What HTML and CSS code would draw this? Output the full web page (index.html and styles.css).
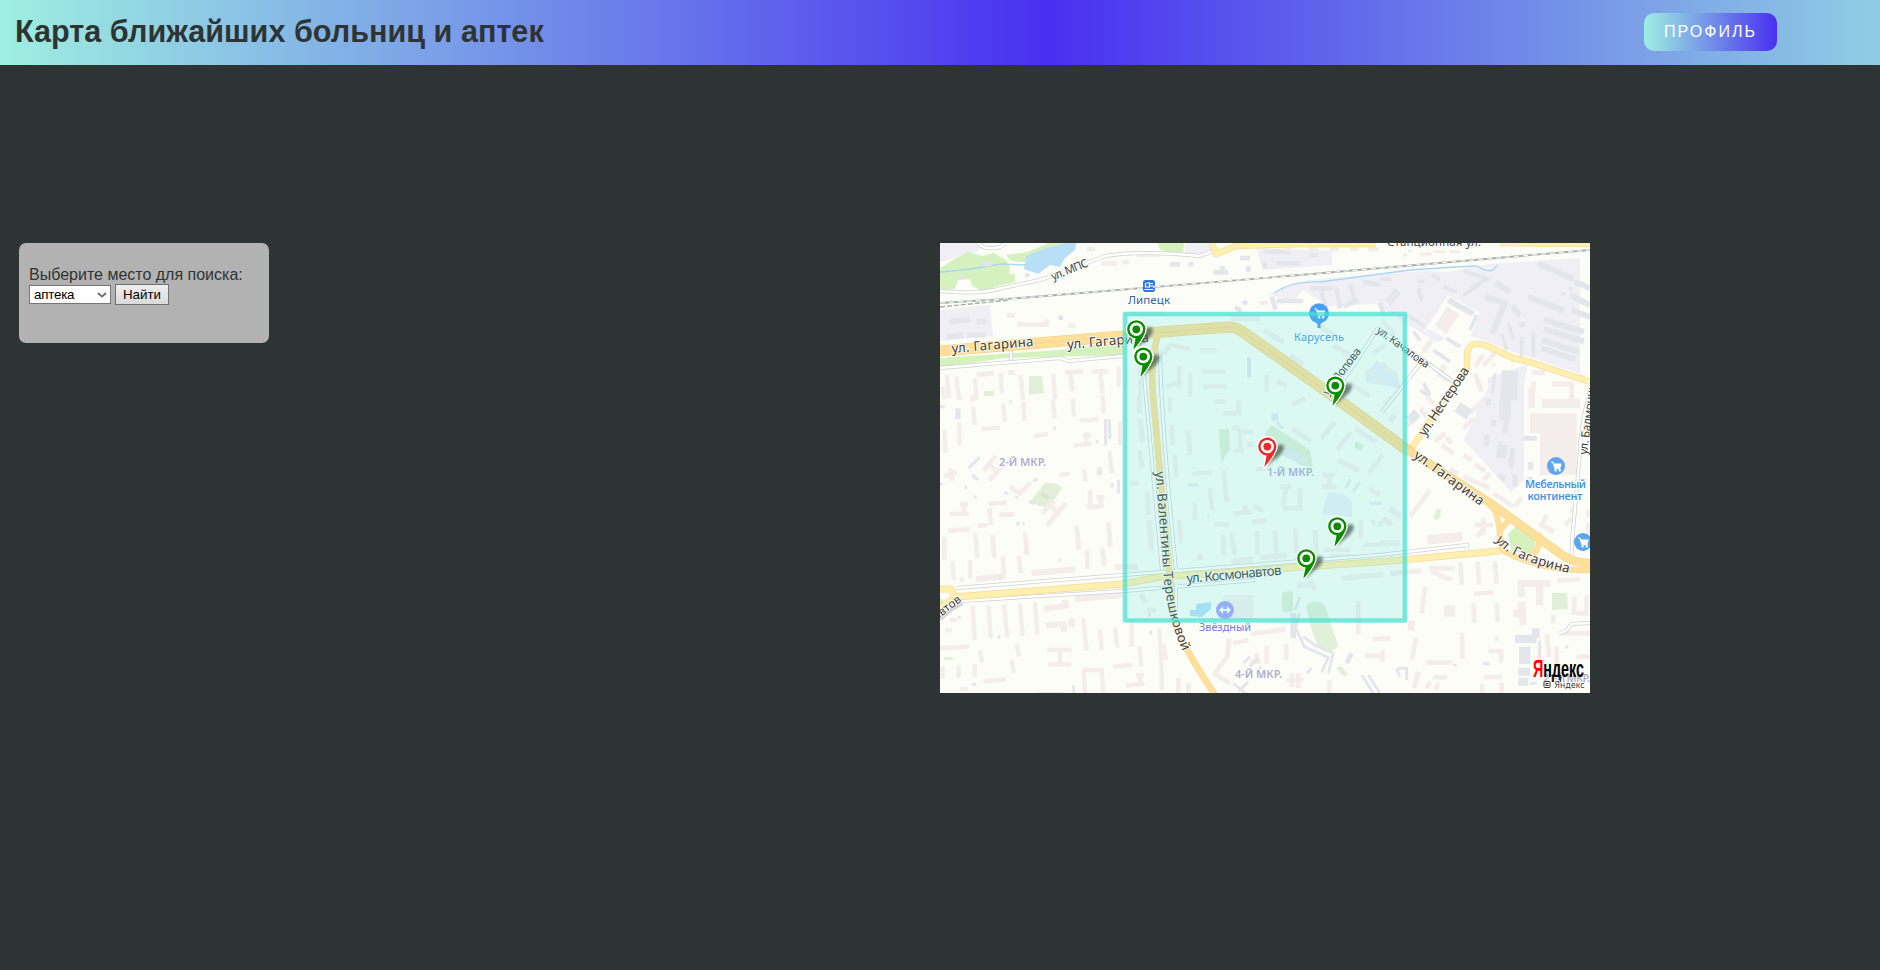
FILE: index.html
```html
<!DOCTYPE html>
<html lang="ru">
<head>
<meta charset="utf-8">
<title>Карта ближайших больниц и аптек</title>
<link rel="stylesheet" href="styles.css">
</head>
<body>
<header class="header">
  <h1 class="title">Карта ближайших больниц и аптек</h1>
  <a class="profile">ПРОФИЛЬ</a>
</header>
<main class="main">
  <form class="search">
    <label class="search-label" for="place">Выберите место для поиска:</label>
    <div class="controls">
      <div class="select-wrap">
        <select id="place" class="select"><option>аптека</option></select>
        <svg class="chevron" width="10" height="6" viewBox="0 0 10 6"><path d="M1 1l4 3.6L9 1"/></svg>
      </div>
      <button class="find" type="button">Найти</button>
    </div>
  </form>
  <svg class="map" width="650" height="450" viewBox="940 243 650 450">
    <defs>
      <filter id="soft" x="-50%" y="-50%" width="200%" height="200%"><feGaussianBlur stdDeviation="1.5"/></filter>
      <g id="pin">
        <path d="M-1 20L13 8Q19 1 15-2Q10-3 5 3Z" fill="#26382e" opacity=".6" filter="url(#soft)"/>
        <path d="M-3 20.500L-.5 9A9.200 9.200 0 1 1 8.500 3.500Q5 12-3 20.500Z" stroke="#fff" stroke-width="2.4" stroke-linejoin="round"/>
        <path d="M-3 20.500L-.5 8Q5 8 8.500 3.500Q5 12-3 20.500Z"/>
        <circle r="9.100"/><circle r="6.700" fill="#fff"/><circle r="3.900"/>
      </g>
      <g id="cart" fill="none" stroke="#fff" stroke-width="1.2"><path d="M-5-4h2l2 6.5h5.5"/><path d="M-2.3-2h7.2l-1 3.3h-5z" fill="#fff"/><circle cx="-.4" cy="4.3" r=".7"/><circle cx="3.7" cy="4.3" r=".7"/></g>
      <path id="tereshkova" d="M1155.500 471.500Q1160 530 1163 566Q1165 612 1183 652"/>
      <path id="gag4" d="M1495.500 540Q1507 560 1572 573.500"/>
    </defs>
    <rect x="940" y="243" width="650" height="450" fill="#fcfdf7"/>

    <!-- industrial zones -->
    <g class="zone">
      <path d="M940 243h45l-8 9-16 4-21 6zM940 310l50-5 3 31-53 5zM1257 248l75 3v14l-70 5zM1185 243h30l-5 11-25 3z"/>
      <path d="M1268 294l40-14 80-7 40-2 20 1 42-8 90-6V374l-50-17-17-5-25-10-30-11-12 8-10 3-60-38-64 3z"/>
      <path d="M1488 378l40-14-4 20v96l-13 12-47-52 24-52z"/>
    </g>
    <path d="M1448 295l32 18-15 37-36-21-6 4z" fill="#fcfdf7"/>
    <path d="M1303 290q5 3 26 17l8 10h-40q-12-9 6-27z" fill="#fcfdf7"/>

    <!-- parks and water -->
    <g class="park">
      <path d="M968 252l14 4 12-3 12 7 4 7-1 7h6l0 8-18 4-13 6-12-6-2-7-12 1-3 9-15 2v-23l13-8z"/>
      <path d="M1006 255l22-3 20-9h30l-23 14-20 6-24-2zM1160 243h24l-1 9-16 2-7-6zM1158 243h12v7h-10z"/>
      <path d="M940 358l120-8 64-8v13l-120 3-64 10zM940 598l4 3-4 5z"/>
      <path d="M1508 534l8-8 14 6 6 8-4 14-20-3z"/>
    </g>
    <g class="grass">
      <path d="M1029 376h13l2 17-15 2zM984 391h10v5h-10zM1097 467h5v8h-5zM1031 500l14-17q14-1 17 5l-12 18q-16 2-19-6z"/>
      <path d="M1219 429h10l1 20-9 14zM1265 435q5-12 8-9l37 24 3 17-13-2-17-12-6 9zM1356 441l8 4-3 6-7-4z"/>
      <path d="M1282 593q9-4 11 0v17q-6 5-11 0zM1306 606q9-9 19 0l13 39q-3 9-15 6-8-2-17-45zM1552 593h15l1 16-16 1zM1434 519l6-10 1 8-4 3zM1036 692h27v2h-27zM1336 668l5-2 7 8-4 3zM944 657h9v3h-9z"/>
    </g>
    <path class="water" d="M1026 256l20-8 20-5h10l-1 7-10 8-5 9-10-2-12 9-14-5z"/>
    <g class="stream"><path d="M940 272Q970 270 1000 264L1026 265"/><path d="M1275 293Q1290 281 1320 282L1380 274 1410 270 1455 267 1477 266Q1492 276 1497 265"/></g>
    <path class="water" d="M1196 604l15-2v7l-9 8-12-1v-6h6z"/>
    <path class="yard" d="M1328 492l15 2 9 8v15l-10-1-20-2z"/>
    <path class="yard" d="M1365 374l12-13 20 11 4 17-18-4-17-2z"/>

    <!-- buildings, one group per district -->
    <g transform="translate(940 240) scale(.3333)">
      <path class="gray" stroke-width="17" d="M28 245l60-6M80 285h58M20 292l50-8M110 245h30"/>
      <path class="gray" stroke-width="14" d="M355 233h14M60 112l12-5M125 72h30M262 100v12"/>
      <path class="pink" stroke-width="14" d="M232 254h95M240 245v15M320 238v15M385 257h20M200 226h25M110 404l50-4M375 397l55-4M485 70h45M545 66h22M590 45h70M205 398h20M455 394h50M440 27h25"/>
      <path class="pink" stroke-width="13" d="M20 405l8 70M48 410l10 70M105 415l5 65M182 400l4 60M242 405l8 75M340 402l5 75M392 400l5 55M482 402l6 60M536 380v60M8 440l6 38"/>
      <path class="gray pale" stroke-width="12" d="M570 220h95M600 380v90M660 390v80"/>
    </g>
    <g transform="translate(1160 240) scale(.3333)">
      <path class="gray" stroke-width="14" d="M160 97h45M180 85h15M310 35h80M350 70h70M315 65v20M30 73h30M85 73h15M240 54h30M450 45h25M265 77v18M250 183l10 10M225 202l20 12"/>
      <path class="gray" stroke-width="14" d="M335 170l12 40M350 183h80M450 145h70M480 140l20 70M530 145l10 60M570 130l15 60M610 125l50 10M550 200l45-20M660 190l10 30"/>
      <path class="pink" stroke-width="12" d="M370 27h25M445 28h30M510 28h25M570 28h25M625 28h30M298 188h25"/>
      <path class="gray pale" stroke-width="16" d="M210 235l90 0M310 270l60 35M480 260l60 35M520 315l50 30M390 345l40 30"/>
      <path class="gray pale" stroke-width="13" d="M10 345l20-30 60 12M120 330h50M20 440l45-15M57 378v65M90 400v70M125 395h70M130 440h70M320 405v50M350 360h50M350 425l30 10M620 390l50 45M570 430l60 40M640 340l35-25"/>
      <path class="gray" stroke-width="11" d="M267 352v60"/>
    </g>
    <g transform="translate(1380 240) scale(.3333)">
      <path class="gray" stroke-width="18" d="M475 70l105 48M585 125l45 20M445 170l105 42M570 165l60 30M575 210l55 22M492 240l120 36M492 268l120 36M485 300l110 36M485 325l100 33M345 128l45 28M315 170l60 20-38 90M395 200l25 25M425 245v15M205 180l75 42"/>
      <path class="gray" stroke-width="11" d="M20 185l30-40M30 195l28-40M0 118h35M112 124h22M115 145l10 38M155 105l25 15M190 140l40 15M250 92l70 25-50 25M250 165l50-30M460 280v70M425 290v60M385 250l15 50M365 280l15 50M290 225l-20 45M545 165l8-8M80 225l55 35M100 275l20 25M200 295l40 25M160 330l50 35M120 450l30 20M130 430l20 35M565 146h12"/>
      <path class="pink" stroke-width="44" d="M220 212l-38 57"/>
      <path class="pink" stroke-width="15" d="M150 215l-12 25M320 228l-8 26M155 300l-25 35M310 345l-25 35M345 340l-35 35M195 375l-20 35M285 400l20 55M455 398h40M460 425v30M565 410h50M515 432h60v50M180 405l25 15M340 370v8"/>
      <path class="gray" stroke-width="50" d="M390 392l-5 88"/>
      <path class="gray" stroke-width="10" d="M345 400l-8 60"/>
      <path class="gray pale" stroke-width="12" d="M5 370l40 40M5 240l40 40"/>
      <path class="pink" stroke-width="9" d="M160 35h35M210 35h30M250 20h35M85 32h10M70 45h10M120 42h35"/>
    </g>
    <g transform="translate(940 395) scale(.3333)">
      <path class="pink" stroke-width="13" d="M100 35l4 55M97 0v20M190 28l5 52M250 20l3 58M339 12l5 57M398 10l4 55M488 0l3 55M13 105l4 68M57 82l2 70M124 103l55-6M282 123l42-6M420 77l55-5M400 152l55-6M440 112v35M430 120h22M509 168l6 68M540 80v70M358 240l32-4M432 225l5 34"/>
      <path class="pink" stroke-width="14" d="M130 227l38-45M148 256l40-43M145 205l20 20M12 244l38-12M30 222l8 35M210 275l35 24M240 295l32-33M28 357h58M60 328h24M72 330v25M145 327l55-5M148 340l5 50M113 393l30-3M178 360l45-2M305 355l38-38M320 392l58-68M335 335l25 25M450 285v48M440 337l52-5M470 307h24M482 305v20M24 407l66-4M13 425v55M106 415l5 60M158 420l4 58M255 412l6 68M410 393l7 70M506 382l5 75M440 465v15M488 460v20"/>
      <path class="gray" stroke-width="9" d="M85 220l34-33M97 240l18 15M497 72v80M508 72l2 60M536 255v40M516 265v12M73 278h8M102 306h8M194 290l8 8M225 307h8M268 318l14 10M234 380v12M248 385h5M340 100h8M468 140h8M208 20h8M280 258l12-6M0 35h14M0 268h8"/>
      <path class="gray" stroke-width="16" d="M54 40v33"/>
      <path class="gray pale" stroke-width="16" d="M600 70l8 72M600 165l5 54M570 265h25M622 290l4 70M628 375l6 92M598 5v50"/>
      <path d="M300 300l10-10 18 15-8 10z" fill="#d9e5d1"/>
    </g>
    <g transform="translate(1160 395) scale(.3333)">
      <path class="gray pale" stroke-width="14" d="M30 8v42M190 55h55M238 16v30M165 20h30M85 107l5 73M34 90l5 60M44 180l5 68M215 100h25M240 100v75M220 168h30M240 110h38M260 148h20M395 30l40-20M398 102l55 38M525 80l-42 52M572 112l-40 52M668 180l-42 55M585 100l65 42M535 197l62 30M95 237l62-5M192 225l8 96M150 278l6 68M57 375l6 70M105 325v50M220 356l55-5M255 330v25M280 333l30 15M277 380l40-3M162 388h45M360 275h35M380 272l-10 60M368 340h60M420 280v55M485 275h45M485 240h40M508 240v30M628 280l32 20M602 375v55M640 375v15M662 378v15M288 222h30M190 420v60M215 415l10 65M292 408v70M345 405l5 70M405 400l5 75M465 405l3 75M235 22v30M490 465h80M610 450h50"/>
      <path class="yard-line" stroke-width="9" d="M82 270h34M557 280l15-28M580 290l20-30M628 325h38M142 362h6M350 82l20 20"/>
      <path class="yard-line" stroke-width="24" d="M335 65h20M370 170l65 30"/>
    </g>
    <g transform="translate(1380 395) scale(.3333)">
      <path class="pink" stroke-width="14" d="M120 40l20 25M140 5l20 20M165 140l30-25M185 150l35 25M215 145l-15-18M250 182l25 12M285 208l30 20M330 235l-20 20M250 245l80 35M210 222l25 15M340 295l60 40M405 335l20-28M150 285l-60 80M270 55l45-45M250 100l30-30M285 390h55M310 370v50M290 425l20-22M500 360l-15 30 35 20M555 390l20-20M105 60l-25 35M570 345h10M625 345v20M625 385v35"/>
      <path class="pink" stroke-width="28" d="M142 435l105-10M485 25h115"/>
      <path class="pink" stroke-width="110" d="M535 55v185"/>
      <path class="pink" stroke-width="60" d="M450 85h90M445 10h20"/>
      <path class="gray" stroke-width="15" d="M385 5l-10 110M362 140l-8 50M375 150l-5 40M398 160l-6 60M320 118v35M340 75v20M405 240v35M452 200v25M355 240l20 12M430 130h40M450 245v35M325 10v20"/>
      <path class="gray" stroke-width="34" d="M232 35l36 24M375 15v60M90 55l20 20"/>
      <path class="grass" d="M172 340l12 6-14 28-10-5z"/>
      <path class="gray pale" stroke-width="18" d="M30 340l30 25M10 370l25 20M0 445h60M35 10l-20 20M45 60l-15 20"/>
    </g>
    <g transform="translate(940 540) scale(.3333)">
      <path class="pink" stroke-width="13" d="M13 0v60M110 0l2 55M158 0l5 52M258 0v45M38 65l3 55M90 60v55M188 50l5 60M236 47l6 52M412 0l5 30M442 30v57M488 25l5 55M510 0v20M66 110v15M98 198l6 102M145 197l8 98M192 194l10 98M240 190l8 98M285 185l7 98M430 233l10 100M480 270l5 60M526 265l5 58M575 240v80M598 320l6 60M658 265l8 145M230 312l7 38M120 330l6 38M216 362l5 38M56 375v40M104 372v38M8 378v38M0 325l88-6M130 424l70-6M520 380l57-5M430 390l6 70M485 388l5 70M430 390h60M558 437l55-5M588 405h24M600 405v24M60 447h24M322 330h73M325 373h68M360 330v40M30 240h20M15 270h20"/>
      <path class="pink" stroke-width="18" d="M275 100l132-12M108 118l90-10M312 207l75-12M375 180v20M318 256l58-3M372 250v25M405 177l145-12M524 82h70M395 235v25"/>
      <path class="gray" stroke-width="8" d="M180 105v15M58 228v8M177 285v12M96 435l12-4M401 435v25M632 272v12M628 220v10M355 60h8"/>
      <path class="gray pale" stroke-width="15" d="M605 160l10 30M620 210h30"/>
    </g>
    <g transform="translate(1160 540) scale(.3333)">
      <path class="pink" stroke-width="14" d="M272 282l105-14M207 295l-5 55-38 50 45 30M220 310l45-10M320 318v55M270 365h32M290 340v30M378 312v48M380 420h50M395 400v40M415 400v45M508 420v40M85 430v30M55 415v45M595 183v98M637 298l55-4M615 347h50M668 330v35M10 310l8 50M5 400v50"/>
      <path class="gray pale" stroke-width="16" d="M545 115l125-12M410 135h50M450 120l15 30M215 65l65-8M120 60v-20M300 52l80-5M510 50h60"/>
      <path class="gray" stroke-width="17" d="M400 220v75"/>
      <path class="gray" stroke-width="8" d="M420 170l-15 40M418 220l-10 45 25 55 72 32-20 45M430 290l35 25 55 25-15 60M250 370l20-20M270 380l25-25M290 395l15-15M455 385l-15 15M220 430l50 40M235 455l30-30M605 405l35 55M625 405l35 55"/>
      <path class="gray pale" stroke-width="90" d="M235 165v75"/>
      <path class="gray" stroke-width="14" d="M575 340l-15 30"/>
    </g>
    <g transform="translate(1380 540) scale(.3333)">
      <path class="pink" stroke-width="14" d="M241 67l5 68M293 65l4 68M344 62l6 70M282 162l58-5M30 101l95-9M150 85h75M155 95l60 25M135 140l-10 80M280 190l3 58M350 190l3 56M532 123l68-6M520 225v25M500 282l8 70M246 278v78M108 293l-12 65M138 368h80M325 333h38v35M312 411h55M160 412h42M345 296h12M115 395l-12 50M150 425l-10 20M175 430l-8 20M590 350h40M582 170v55M620 165v55h-30M0 296h30M307 432v28M365 430v28M530 320v60M540 280h90"/>
      <path class="pink" stroke-width="22" d="M412 130h100M424 125v45M479 130v65M424 185l5 70M400 220h25M94 242v30"/>
      <path class="pink" stroke-width="34" d="M192 213h33"/>
      <path class="gray" stroke-width="24" d="M405 297h65M467 265v30M415 395h35M415 425h30"/>
      <path class="gray" stroke-width="34" d="M434 320v52"/>
      <path class="gray" stroke-width="9" d="M479 302v60M55 385h25v35M50 385l10 25M308 371h22M220 375h10M555 321h10M450 430h20"/>
    </g>

    <!-- railway -->
    <g fill="none"><path stroke="#a9adad" stroke-width="1.800" d="M940 303L1020 298 1300 275 1590 250"/><path stroke="#fff" stroke-width="1" stroke-dasharray="5 4" d="M940 303L1020 298 1300 275 1590 250"/><path stroke="#a9adad" stroke-width="1.400" stroke-dasharray="5 2" d="M940 307L1010 300"/></g>

    <!-- minor roads: casing then fill -->
    <g class="lane-edge">
      <path d="M940 291Q980 295 1002 288L1040 280Q1080 266 1105 256 1140 250 1200 256L1216 250M978 243q6 8 22 4l6-4"/>
      <path d="M940 368L1060 358 1068 361 1123 356M1011 360v-10M956 588L1123 575 1380 555 1467 545V549M960 601L1123 591 1256 580M1590 623l-18 1-6 7-8 3M1590 392q-10 35-10 60l-8 90-1 30M1378 328Q1355 365 1332 395M1378 328L1454 382M1420 364L1382 412M1144 375L1162 570M1160 350Q1161 420 1176 570M1176 610V583"/>
      <path d="M940 619l12-10 10-6"/>
    </g>
    <g class="lane">
      <path d="M940 291Q980 295 1002 288L1040 280Q1080 266 1105 256 1140 250 1200 256L1216 250M978 243q6 8 22 4l6-4"/>
      <path d="M940 368L1060 358 1068 361 1123 356M1011 360v-10M956 588L1123 575 1380 555 1467 545V549M960 601L1123 591 1256 580M1590 623l-18 1-6 7-8 3M1590 392q-10 35-10 60l-8 90-1 30M1378 328Q1355 365 1332 395M1378 328L1454 382M1420 364L1382 412M1144 375L1162 570M1160 350Q1161 420 1176 570M1176 610V583"/>
    </g>

    <!-- main roads -->
    <g fill="none" stroke-linejoin="round">
      <g stroke="#f9d995">
        <path stroke-width="6.500" d="M1590 382L1530 362 1513 358 1487 346Q1467 338 1467 357V368L1410 450M1212 243l4 11 20-8 60-2h80M1500 243l90 1M940 608l15-11"/>
        <path stroke-width="7" d="M940 589H951L955 597 1123 584 1160 577 1390 561 1500 551"/>
        <path stroke-width="6.500" d="M1158 335Q1150 360 1153 395L1160 473 1168 555 1173 615Q1178 640 1215 695"/>
        <path stroke-width="6" d="M1490 505Q1498 510 1500 535L1502 549M1500 530L1511 518M1538 533Q1542 550 1530 556M1500 549Q1540 572 1592 570"/>
      </g>
      <g stroke="#fff0b0">
        <path stroke-width="5" d="M1590 382L1530 362 1513 358 1487 346Q1467 338 1467 357V368L1410 450M1212 243l4 11 20-8 60-2h80M1500 243l90 1M940 608l15-11"/>
        <path stroke-width="5.600" d="M940 589H951L955 597 1123 584 1160 577 1390 561 1500 551"/>
      </g>
      <path stroke="#f3cc81" stroke-width="11.200" d="M940 351L1123 336 1160 332 1229 327Q1236 327 1243 332L1333 396 1410 452"/>
      <path stroke="#ffe09a" stroke-width="10" d="M940 351L1123 336 1160 332 1229 327Q1236 327 1243 332L1333 396 1410 452"/>
      <path stroke="#efce89" stroke-width=".6" d="M1000 346l123-10 106-9q7 0 14 5l90 64 77 56"/>
      <path stroke="#f3cc81" stroke-width="8.500" d="M1408 450L1493 505 1562 555Q1575 564 1592 563"/>
      <g stroke="#ffe09a">
        <path stroke-width="7.300" d="M1406 449L1493 505 1562 555Q1575 564 1592 563"/>
        <path stroke-width="5.200" d="M1158 335Q1150 360 1153 395L1160 473 1168 555 1173 615Q1178 640 1215 695"/>
        <path stroke-width="4.800" d="M1490 505Q1498 510 1500 535L1502 549M1500 530L1511 518M1538 533Q1542 550 1530 556M1500 549Q1540 572 1592 570"/>
      </g>
    </g>

    <!-- places -->
    <g>
      <rect x="1143" y="280" width="12" height="12" rx="2.500" fill="#2f76e5"/>
      <path d="M1144.500 289.500h9M1145.500 283v4h4v-4h-3M1150 283.500h3M1150 286h4v2" fill="none" stroke="#fff" stroke-width="1.200"/>
      <circle cx="1319" cy="313.200" r="10" fill="#4b9ef2"/><path d="M1311 319L1317.500 324V328H1320.500V324L1327 319Z" fill="#4b9ef2"/>
      <use href="#cart" x="1319.500" y="313"/>
      <circle cx="1556" cy="466" r="9" fill="#5aa6ef"/><use href="#cart" x="1556" y="466"/>
      <circle cx="1583" cy="542" r="9" fill="#5aa6ef"/><use href="#cart" x="1583" y="542"/>
      <circle cx="1225" cy="610" r="9" fill="#a8a2fb"/><path d="M1220 610h10" stroke="#fff" stroke-width="2"/><path d="M1223 606v8l-4-4zM1227 606v8l4-4z" fill="#fff"/>
    </g>
    <g class="halo">
      <g class="district">
        <text x="999" y="466" textLength="47">2-Й МКР.</text>
        <text x="1267" y="476" textLength="47">1-Й МКР.</text>
        <text x="1235" y="677.500" textLength="47">4-Й МКР.</text>
        <text x="1543" y="682" textLength="47">21-Й МКР.</text>
      </g>
      <text class="station" x="1128" y="304" textLength="42">Липецк</text>
      <text class="shop" x="1294" y="341" textLength="50">Карусель</text>
      <text class="shop bold" x="1525" y="488" textLength="61">Мебельный</text>
      <text class="shop bold" x="1527.500" y="499.500" textLength="55">континент</text>
      <text class="sport" x="1199" y="630.500" textLength="52">Звёздный</text>
      <g class="street">
        <text transform="translate(952 353) rotate(-5)" textLength="82">ул. Гагарина</text>
        <text transform="translate(1067.500 349) rotate(-5)" textLength="82">ул. Гагарина</text>
        <text class="s11" transform="translate(1053 280.500) rotate(-22)" textLength="39">ул. МПС</text>
        <text class="s11" x="1387" y="245.500" textLength="94">Станционная ул.</text>
        <text class="s11" transform="translate(1328 396) rotate(-53)" textLength="56">ул. Попова</text>
        <text class="s10" transform="translate(1376 332) rotate(36)" textLength="62">ул. Качалова</text>
        <text transform="translate(1425 437) rotate(-56)" textLength="80">ул. Нестерова</text>
        <text class="s11" transform="translate(1587 455) rotate(-83)" textLength="79">ул. Балмочных</text>
        <text transform="translate(1187 583) rotate(-5)" textLength="95">ул. Космонавтов</text>
        <text class="s11" transform="translate(902 646) rotate(-37)" textLength="75">Космонавтов</text>
        <text><textPath href="#tereshkova" textLength="183">ул. Валентины Терешковой</textPath></text>
        <text transform="translate(1413 457) rotate(36)" textLength="83">ул. Гагарина</text>
        <text><textPath href="#gag4" textLength="82">ул. Гагарина</textPath></text>
      </g>
    </g>

    <rect class="area" x="1125" y="314" width="280" height="306.500"/>
    <g fill="#0a8c00">
      <use href="#pin" x="1136.300" y="329.300"/><use href="#pin" x="1143.300" y="356.600"/>
      <use href="#pin" x="1335.300" y="385.600"/><use href="#pin" x="1337.300" y="526.300"/>
      <use href="#pin" x="1306.300" y="558.300"/><use href="#pin" x="1267.300" y="446.600" fill="#ec2828"/>
    </g>
    <text class="logo" x="1533" y="677" textLength="51" lengthAdjust="spacingAndGlyphs"><tspan fill="#f00">Я</tspan>ндекс</text>
    <g class="copy">
      <rect x="1544" y="681.500" width="6" height="6" rx="1" fill="none"/><path d="M1548.500 683.500h-2.500v2h2.500" fill="none"/>
      <text x="1554.500" y="688" textLength="30">Яндекс</text>
    </g>
  </svg>
</main>
</body>
</html>
```
FILE: styles.css
```css
body {
  margin: 0;
  min-height: 970px;
  background: #2e3434;
  color: #2e3434;
  font-family: "Liberation Sans", Arial, sans-serif;
}
.header {
  display: flex;
  align-items: center;
  justify-content: space-between;
  box-sizing: border-box;
  height: 65px;
  padding: 0 103px 2px 15px;
  background: linear-gradient(to right, #9eefe1 0, #4830f0 1049px, #9eefe1 2057px);
}
.title { margin: 0; font-size: 30.6px; line-height: 37px; white-space: nowrap; }
.profile {
  box-sizing: border-box;
  width: 133px;
  height: 38px;
  border-radius: 10px;
  background: linear-gradient(to right, #9eefe1, #4830f0);
  color: #fff;
  font: 16px/37px "Liberation Sans", Arial, sans-serif;
  letter-spacing: 2px;
  text-align: center;
}
.main { display: flex; align-items: flex-start; padding: 178px 0 0 19px; }
.search {
  box-sizing: border-box;
  width: 250px;
  height: 100px;
  margin-right: 671px;
  padding: 22px 10px 0;
  border-radius: 7px;
  background: #b2b2b2;
}
.search-label { display: block; font-size: 16px; line-height: 19px; white-space: nowrap; }
.controls { display: flex; align-items: center; gap: 4px; }
.select-wrap { display: grid; width: 82px; height: 19px; }
.select {
  grid-area: 1 / 1;
  appearance: none;
  width: 82px;
  height: 19px;
  padding: 0 4px;
  border: 1px solid #767676;
  border-radius: 0;
  background: #fff;
  color: #000;
  font: 13.333px "Liberation Sans", Arial, sans-serif;
  letter-spacing: -.2px;
}
.chevron { grid-area: 1 / 1; place-self: center end; margin-right: 4px; fill: none; stroke: #666; stroke-width: 1.7; }
.find {
  box-sizing: border-box;
  width: 54px;
  height: 21px;
  padding: 0;
  border: 1px solid #707070;
  border-radius: 0;
  background: linear-gradient(#efefef, #dadada);
  color: #000;
  font: 13.333px "Liberation Sans", Arial, sans-serif;
}
.map { display: block; flex: none; font-family: "Noto Sans", "Open Sans", sans-serif; }
.zone { fill: #f0eff6; }
.park { fill: #d5f1be; }
.grass { fill: #e2f0d9; }
.water { fill: #b9dff7; }
.yard { fill: #eef0f9; }
.yard-line { fill: none; stroke: #e9ebf2; }
.stream { fill: none; stroke: #a9d7f3; stroke-width: 1.3; }
.pink { fill: none; stroke: #f4edeb; }
.gray { fill: none; stroke: #e5e6ec; }
.pale { stroke: #f5f0ee; }
.lane-edge { fill: none; stroke: #cfd1d1; stroke-width: 4; }
.lane { fill: none; stroke: #fff; stroke-width: 2.5; }
.halo { stroke: #fff; stroke-opacity: .75; stroke-width: 2px; stroke-linejoin: round; paint-order: stroke; }
.district { fill: #b1acca; font-size: 11px; font-weight: 600; }
.station { fill: #315fa8; font-size: 11.5px; }
.shop { fill: #4496e6; font-size: 11px; }
.bold { font-weight: 600; }
.sport { fill: #7774e4; font-size: 11px; }
.street { fill: #414141; font-size: 13.3px; }
.s11 { font-size: 11.5px; }
.s10 { font-size: 10.5px; }
.area { fill: rgb(80 226 220 / .18); stroke: rgb(70 225 210 / .72); stroke-width: 4.6; stroke-linejoin: round; }
.logo { fill: #000; font: bold 23.5px "Liberation Sans", Arial, sans-serif; }
.copy { font-size: 8.5px; }
.copy rect, .copy path { stroke: #333; stroke-width: 1; }
.copy text { fill: #333; stroke: #fff; stroke-width: 1.5px; paint-order: stroke; }
```
